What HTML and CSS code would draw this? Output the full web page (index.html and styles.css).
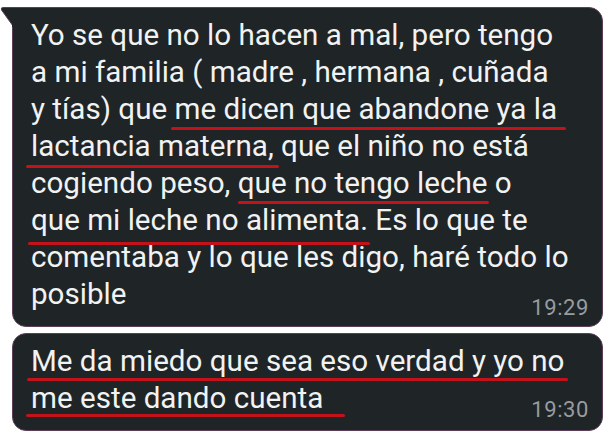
FILE: index.html
```html
<!DOCTYPE html>
<html lang="es">
<head>
<meta charset="utf-8">
<link rel="stylesheet" href="styles.css">
</head>
<body>
<div class="chat">
  <div class="bubble first">
    <svg class="tail" width="14" height="20" viewBox="0 0 14 20"><path d="M13 0.5 L3 0.5 Q0.5 0.5 1.5 3 L13 19 Z" fill="#1f2427" stroke="#5e3f5a" stroke-width="1"/><rect x="12" y="1" width="3" height="19" fill="#1f2427"/></svg>
    <p class="text">Yo se que no lo hacen a mal, pero tengo<br>a mi familia ( madre , hermana , cuñada<br>y tías) que me dicen que abandone ya la<br>lactancia materna, que el niño no está<br>cogiendo peso, que no tengo leche o<br>que mi leche no alimenta. Es lo que te<br>comentaba y lo que les digo, haré todo lo<br>posible</p>
    <div class="time t1">19:29</div>
    <span class="mark" style="left:158px;top:119px;width:395px"></span>
    <span class="mark" style="left:13px;top:157px;width:253px"></span>
    <span class="mark" style="left:225px;top:193px;width:251px"></span>
    <span class="mark" style="left:15px;top:234px;width:342px"></span>
  </div>
  <div class="bubble second">
    <p class="text">Me da miedo que sea eso verdad y yo no<br>me este dando cuenta</p>
    <div class="time t2">19:30</div>
    <span class="mark" style="left:14px;top:44px;width:541px"></span>
    <span class="mark" style="left:13px;top:80px;width:319px"></span>
  </div>
</div>
</body>
</html>
```
FILE: styles.css
```css
html, body {
  margin: 0;
  padding: 0;
  background: #ffffff;
}
.chat {
  display: flex;
  flex-direction: column;
  gap: 6px;
  padding: 7px 6px 0 12px;
}
.bubble {
  position: relative;
  background: #1f2427;
  border: 1px solid #5e3f5a;
  border-radius: 14px;
  box-sizing: border-box;
  padding: 9px 14px 0 18px;
  font-family: Roboto, "Noto Sans", sans-serif;
  color: #f1f2f2;
}
.first {
  height: 320px;
  border-top-left-radius: 0;
}
.second {
  height: 98px;
}
.tail {
  position: absolute;
  left: -13px;
  top: -1px;
}
.text {
  margin: 0;
  font-size: 29.6px;
  line-height: 37px;
  white-space: nowrap;
}
.time {
  text-align: right;
  font-size: 22px;
  line-height: 24px;
  letter-spacing: 0.6px;
  margin-right: -1px;
  color: #979c9f;
}
.t1 {
  margin-top: -17px;
}
.t2 {
  margin-top: -19.5px;
}
.mark {
  position: absolute;
  height: 3px;
  background: #c4121b;
  border-radius: 2px;
}
```
